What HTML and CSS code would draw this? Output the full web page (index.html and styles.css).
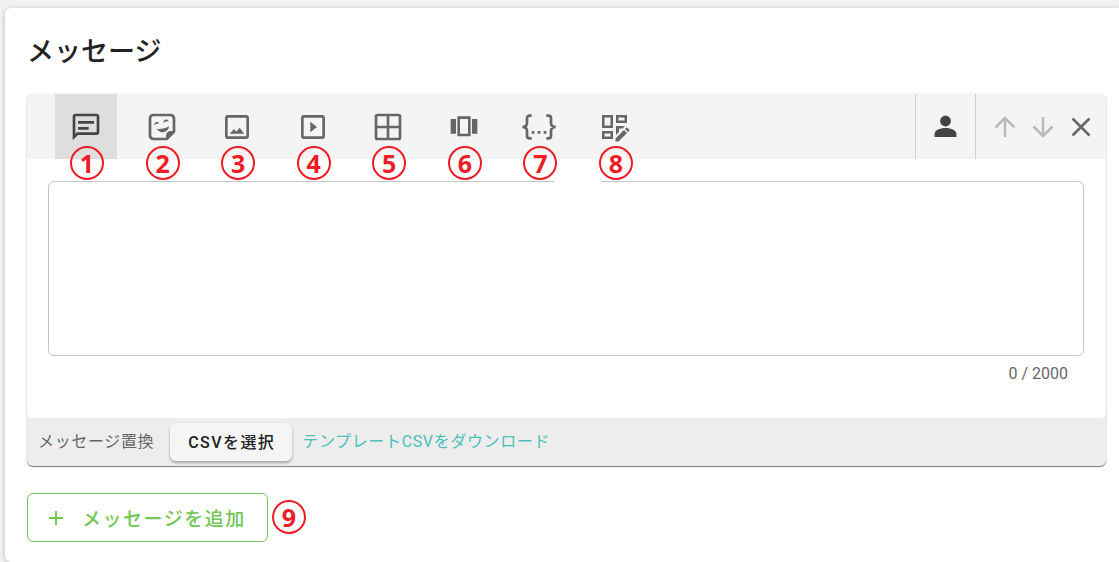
FILE: index.html
```html
<!doctype html>
<html lang="ja">
<head>
	<meta charset="UTF-8">
	<title>メッセージ</title>
	<link rel="stylesheet" href="styles.css">
</head>
<body>
	<main class="card">
		<h1>メッセージ</h1>
		<section class="panel">
			<div class="toolbar">
				<div class="types">
					<button type="button" class="type active" aria-label="テキスト">
						<svg viewBox="0 0 24 24"><path d="M4 4h16v12H5.200L4 17.200V4m0-2c-1.100 0-2 .9-2 2v18l4-4h14c1.100 0 2-.9 2-2V4c0-1.100-.9-2-2-2H4m2 10h8v2H6v-2m0-4.500h12v2H6v-2z"/></svg>
						<span class="badge">1</span>
					</button>
					<button type="button" class="type" aria-label="スタンプ">
						<svg viewBox="0 0 24 24"><path d="M5.500 2A3.500 3.500 0 0 0 2 5.500v13A3.500 3.500 0 0 0 5.500 22H16l6-6V5.500A3.500 3.500 0 0 0 18.500 2h-13m.3 2h12.400A1.800 1.800 0 0 1 20 5.800V15h-1.500a3.500 3.500 0 0 0-3.500 3.500V20H5.800A1.800 1.800 0 0 1 4 18.200V5.800A1.800 1.800 0 0 1 5.800 4m7.200 4.900c.3-1.500 1-2.400 2-2.500 1-.1 1.600.4 2 1.300-1.300-.3-2.600.1-4 1.200M6 10.600c.3-1.500 1-2.300 2-2.400 1-.1 1.600.3 2 1.200-1.300-.2-2.600.2-4 1.200m2 2.700c3.500.5 6.300-.3 9.300-1.900-.3 2.500-1.600 3.800-3.700 4.300-2.200.5-4.100-.2-5.600-2.400z"/></svg>
						<span class="badge">2</span>
					</button>
					<button type="button" class="type" aria-label="画像">
						<svg viewBox="0 0 24 24"><path d="M19 5v14H5V5h14m0-2H5c-1.100 0-2 .9-2 2v14c0 1.100.9 2 2 2h14c1.100 0 2-.9 2-2V5c0-1.100-.9-2-2-2M6.500 17h11l-3.500-4.500-2.500 3-1.800-2L6.500 17z"/></svg>
						<span class="badge">3</span>
					</button>
					<button type="button" class="type" aria-label="動画">
						<svg viewBox="0 0 24 24"><path d="M19 5v14H5V5h14m0-2H5c-1.100 0-2 .9-2 2v14c0 1.100.9 2 2 2h14c1.100 0 2-.9 2-2V5c0-1.100-.9-2-2-2m-9 5v8l5-4-5-4z"/></svg>
						<span class="badge">4</span>
					</button>
					<button type="button" class="type" aria-label="イメージマップ">
						<svg viewBox="0 0 24 24"><path d="M4 2h16a2 2 0 0 1 2 2v16a2 2 0 0 1-2 2H4a2 2 0 0 1-2-2V4a2 2 0 0 1 2-2m0 2v7h7V4H4m9 0v7h7V4h-7m-9 9v7h7v-7H4m9 0v7h7v-7h-7z"/></svg>
						<span class="badge">5</span>
					</button>
					<button type="button" class="type" aria-label="カルーセル">
						<svg viewBox="0 0 24 24"><path d="M7 19h10V4H7v15m2-13h6v11H9V6M2 17h4V6H2v11M18 6v11h4V6h-4z"/></svg>
						<span class="badge">6</span>
					</button>
					<button type="button" class="type" aria-label="JSON">
						<svg class="wide" viewBox="0 0 30 24"><path d="M9.500 3.500H8a2 2 0 0 0-2 2v3.500q0 3-3.500 3Q6 12 6 15v3.500a2 2 0 0 0 2 2h1.500M20.500 3.500H22a2 2 0 0 1 2 2v3.500q0 3 3.500 3Q24 12 24 15v3.500a2 2 0 0 1-2 2h-1.500" fill="none" stroke="currentColor" stroke-width="2"/><path d="M9.500 15h2v2h-2zM14 15h2v2h-2zM18.500 15h2v2h-2z"/></svg>
						<span class="badge">7</span>
					</button>
					<button type="button" class="type" aria-label="テンプレート">
						<svg viewBox="0 0 32 32"><path d="M3 4h11v13H3V4m2.500 2.500v8h6v-8h-6M17 4h11v8H17V4m2.500 2.500v3h6v-3h-6M3 20h11v8H3v-8m2.500 2.500v3h6v-3h-6M17 15h9l-2.500 2.500H20V21l-3 3v-9M16.500 27.500 25 19l3 3-8.500 8.500h-3v-3m9.500-9.500 1-1q.8-.8 1.600 0l1.400 1.400q.8.8 0 1.600l-1 1-3-3z"/></svg>
						<span class="badge">8</span>
					</button>
				</div>
				<button type="button" class="user" aria-label="送信者">
					<svg viewBox="0 0 24 24"><path d="M12 1.500a5.200 5.200 0 1 1 0 10.400 5.200 5.200 0 0 1 0-10.400M1.500 19.500c0-4 5-6 10.500-6s10.500 2 10.500 6V22h-21z"/></svg>
				</button>
				<div class="actions">
					<button type="button" disabled aria-label="上へ"><svg viewBox="0 0 24 24"><path d="M12 22V3M2.500 12.500 12 3l9.500 9.500"/></svg></button>
					<button type="button" disabled aria-label="下へ"><svg viewBox="0 0 24 24"><path d="M12 2v19M2.500 11.500 12 21l9.500-9.500"/></svg></button>
					<button type="button" aria-label="閉じる"><svg viewBox="0 0 24 24"><path d="m3.500 3.500 17 17m0-17-17 17"/></svg></button>
				</div>
			</div>
			<div class="editor">
				<textarea aria-label="メッセージ" maxlength="2000"></textarea>
				<span class="notch"></span>
				<p class="counter">0 / 2000</p>
			</div>
			<div class="replace">
				<span>メッセージ置換</span>
				<button type="button" class="csv">CSVを選択</button>
				<a href="#">テンプレートCSVをダウンロード</a>
			</div>
		</section>
		<button type="button" class="add">
			<svg viewBox="0 0 16 16"><path d="M8 1v14M1 8h14"/></svg>
			<span class="label">メッセージを追加</span>
			<span class="badge">9</span>
		</button>
	</main>
</body>
</html>
```

FILE: styles.css
```css
* {
	box-sizing: border-box;
}
body {
	margin: 0;
	padding: 8px 0 0 5px;
	background-color: #f2f2f2;
	font-family: Roboto, "Noto Sans CJK JP", sans-serif;
	font-size: 16px;
	line-height: 24px;
	color: #222;
}
button {
	position: relative;
	padding: 0;
	border: 0;
	background: none;
	font: inherit;
	color: #666;
	cursor: pointer;
}
svg {
	display: block;
	width: 32px;
	height: 32px;
	fill: currentColor;
}
.card {
	padding: 24px 13px 20px 22px;
	background-color: #fff;
	border-radius: 6px 0 0 6px;
	box-shadow: 0 1px 5px rgba(0, 0, 0, .25);
}
h1 {
	margin: 0 0 22px;
	font-size: 27px;
	font-weight: 500;
	line-height: 40px;
}
.panel {
	background-color: #ededed;
	border-radius: 6px;
	box-shadow: 0 1px 1px rgba(0, 0, 0, .5), 0 0 2px rgba(0, 0, 0, .15);
}
.toolbar {
	display: flex;
	height: 65px;
	padding-left: 28px;
	background-color: #f4f4f4;
	border-radius: 6px 6px 0 0;
}
.types {
	display: flex;
	justify-content: space-between;
	width: 591px;
	margin-right: auto;
}
.type {
	display: flex;
	align-items: center;
	justify-content: center;
	width: 62px;
}
.active {
	background-color: #dedede;
	color: #444;
}
.wide {
	width: 40px;
}
.badge {
	position: absolute;
	z-index: 1;
	top: 52px;
	left: 15px;
	width: 34px;
	height: 34px;
	border: 2px solid #ee1c25;
	border-radius: 50%;
	font-family: "Open Sans", sans-serif;
	font-size: 25px;
	font-weight: 700;
	line-height: 30px;
	letter-spacing: 0;
	text-align: center;
	color: #ee1c25;
}
.user {
	display: flex;
	align-items: center;
	justify-content: center;
	width: 61px;
	border: solid #d0d0d0;
	border-width: 0 1px;
	color: #444;
}
.user svg {
	width: 25px;
	height: 25px;
}
.actions {
	display: flex;
	align-items: center;
	gap: 14px;
	padding: 0 13px 0 17px;
}
.actions svg {
	width: 24px;
	height: 24px;
	fill: none;
	stroke: currentColor;
	stroke-width: 2.5;
}
.actions button:disabled {
	color: #b8b8b8;
}
.editor {
	position: relative;
	padding: 22px 22px 32px 21px;
	background-color: #fff;
	border-radius: 0 0 6px 6px;
}
textarea {
	display: block;
	width: 100%;
	height: 175px;
	padding: 12px;
	border: 1px solid #c4c4c4;
	border-radius: 6px;
	font: inherit;
	resize: none;
}
.notch {
	position: absolute;
	top: 22px;
	left: 527px;
	width: 47px;
	height: 1px;
	background-color: #fff;
}
.counter {
	margin: 6px 16px 0 0;
	text-align: right;
	color: #666;
}
.replace {
	display: flex;
	align-items: center;
	gap: 10px;
	height: 48px;
	padding-left: 11px;
	letter-spacing: .04em;
	color: #666;
}
.csv {
	height: 38px;
	margin-left: 6px;
	padding: 2px 17px 0 18px;
	background-color: #f5f5f5;
	border-radius: 6px;
	box-shadow: 0 2px 3px rgba(0, 0, 0, .3);
	font-weight: 500;
	letter-spacing: .09em;
	color: #222;
}
.replace a {
	color: #4bbfb9;
	text-decoration: none;
}
.add {
	display: flex;
	align-items: center;
	gap: 18px;
	height: 49px;
	margin-top: 27px;
	padding: 0 21px 0 20px;
	border: 1px solid #74c656;
	border-radius: 6px;
	font-size: 19px;
	font-weight: 500;
	letter-spacing: .08em;
	color: #74c656;
}
.add svg {
	width: 16px;
	height: 16px;
	fill: none;
	stroke: currentColor;
	stroke-width: 2;
}
.label {
	padding-top: 4px;
}
.add .badge {
	top: 6px;
	left: 244px;
}
```
